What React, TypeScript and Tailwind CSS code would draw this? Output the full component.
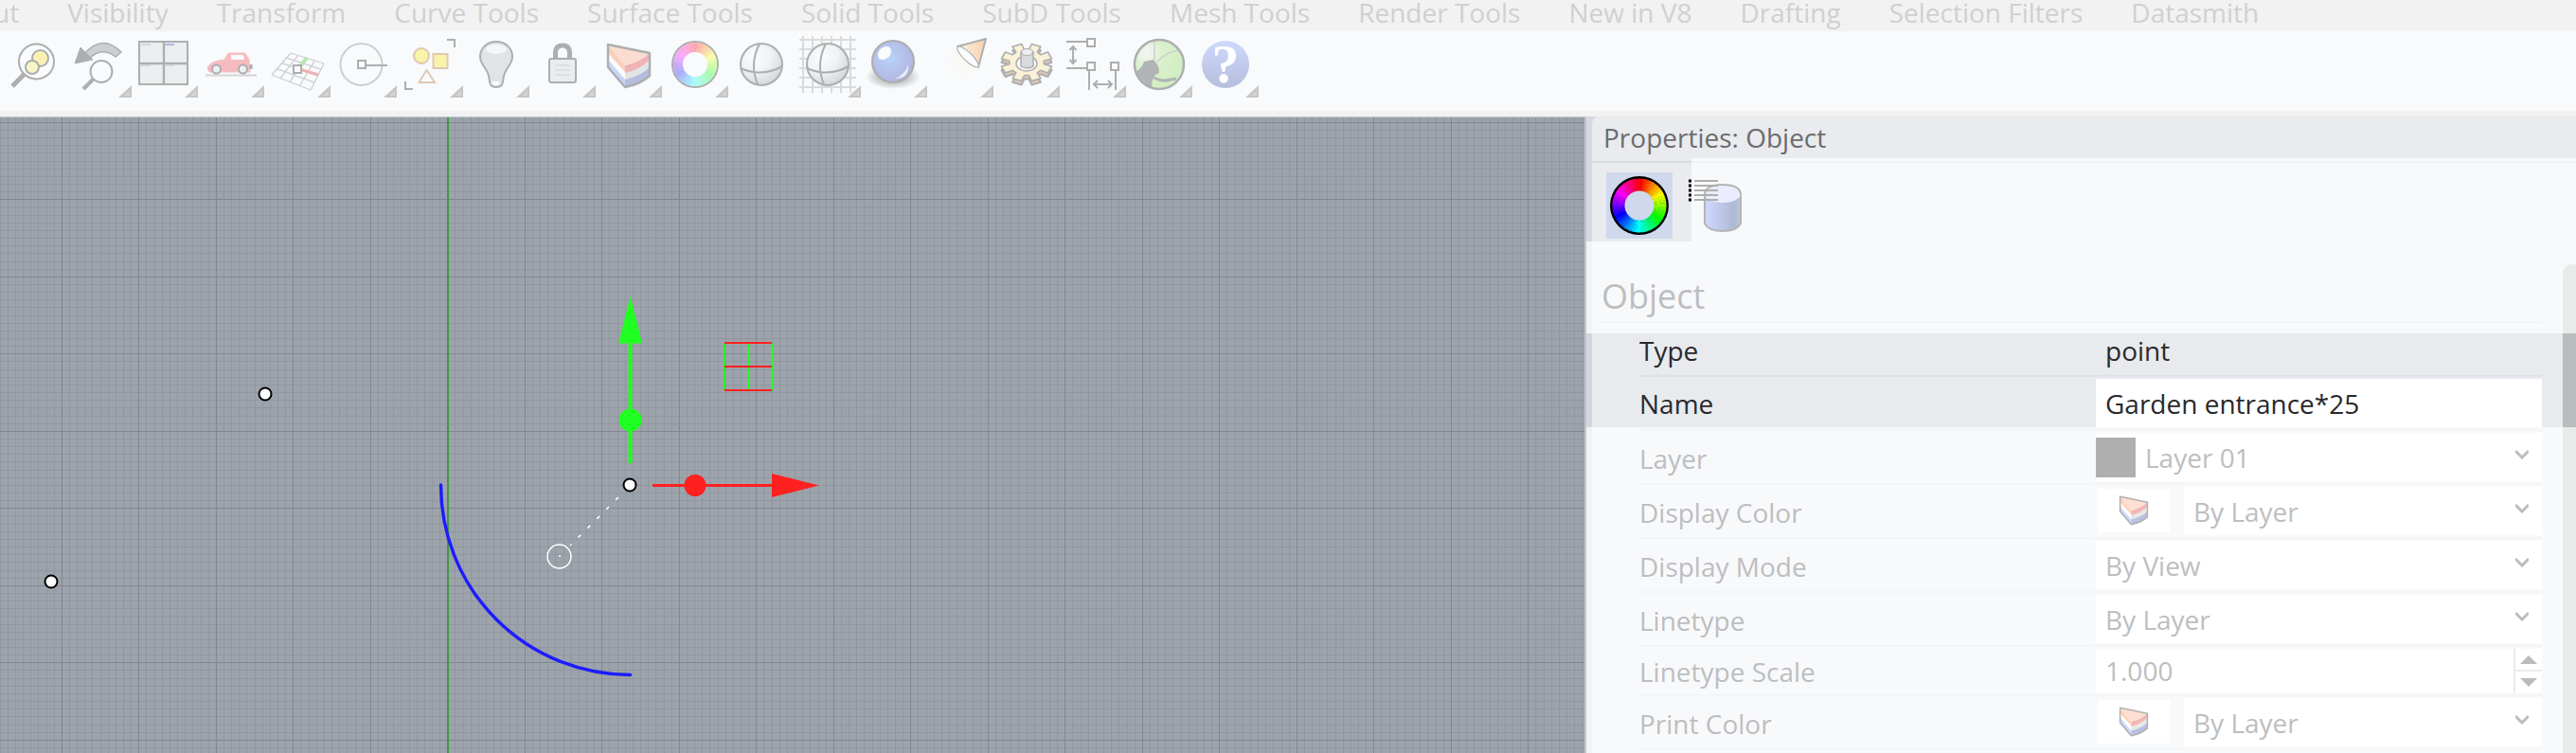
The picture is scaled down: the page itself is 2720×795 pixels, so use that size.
import { useId } from "react";
import type { ReactNode } from "react";

const menuItems = [
  "ut",
  "Visibility",
  "Transform",
  "Curve Tools",
  "Surface Tools",
  "Solid Tools",
  "SubD Tools",
  "Mesh Tools",
  "Render Tools",
  "New in V8",
  "Drafting",
  "Selection Filters",
  "Datasmith",
];

function polar(cx: number, cy: number, r: number, deg: number) {
  const a = ((deg - 90) * Math.PI) / 180;
  return `${(cx + r * Math.cos(a)).toFixed(2)} ${(cy + r * Math.sin(a)).toFixed(2)}`;
}

function HueRing({ cx, cy, r, inner }: { cx: number; cy: number; r: number; inner: number }) {
  const steps = 60;
  const size = 360 / steps;
  return (
    <g>
      {Array.from({ length: steps }, (_, i) => {
        const from = i * size;
        const to = from + size + 0.6;
        return (
          <path
            key={i}
            fill={`hsl(${from} 100% 50%)`}
            d={`M${polar(cx, cy, r, from)}A${r} ${r} 0 0 1 ${polar(cx, cy, r, to)}L${polar(cx, cy, inner, to)}A${inner} ${inner} 0 0 0 ${polar(cx, cy, inner, from)}Z`}
          />
        );
      })}
    </g>
  );
}

function Cake() {
  return (
    <g strokeLinejoin="round">
      <path d="M12 14L30 36V59L12 38Z" fill="#fff" />
      <path d="M12 14L30 36V43L12 23Z" fill="#ff7733" />
      <path d="M12 30L30 51V59L12 38Z" fill="#6a86f5" />
      <path d="M30 36Q45 33 56 23V47Q46 56 30 59Z" fill="#b9b9b9" />
      <path d="M30 36Q45 33 56 23V30Q45 41 30 44Z" fill="#dd1f26" />
      <path d="M30 51Q45 48 56 38V47Q46 56 30 59Z" fill="#2a3fa0" />
      <path d="M12 14L56 23Q45 33 30 36Z" fill="#ff9f7a" />
      <path d="M12 14L56 23V47Q46 56 30 59L12 38Z" fill="none" stroke="#111" strokeWidth="2.4" />
    </g>
  );
}

function Sphere() {
  const id = useId();
  return (
    <g stroke="#111" strokeWidth="2">
      <radialGradient id={id} cx="0.35" cy="0.3" r="0.75">
        <stop offset="0" stopColor="#fff" />
        <stop offset="0.5" stopColor="#e4e4e4" />
        <stop offset="1" stopColor="#8a8a8a" />
      </radialGradient>
      <circle cx="34" cy="35" r="22" fill={`url(#${id})`} />
      <path d="M32 13Q21 35 30 56M12 39Q34 49 56 37" fill="none" />
    </g>
  );
}

function Gear() {
  const teeth = 8;
  const pts: string[] = [];
  for (let i = 0; i < teeth; i++) {
    const base = (i * 360) / teeth + 22.5;
    const profile: [number, number][] = [
      [-15, 0.68],
      [-11, 1],
      [11, 1],
      [15, 0.68],
    ];
    for (const [d, k] of profile) {
      const a = ((base + d) * Math.PI) / 180;
      pts.push(`${(34 + 27 * k * Math.cos(a)).toFixed(1)},${(33 + 20 * k * Math.sin(a)).toFixed(1)}`);
    }
  }
  return (
    <g strokeLinejoin="round">
      <polygon points={pts.join(" ")} transform="translate(0 4)" fill="#a85a2a" stroke="#111" strokeWidth="2" />
      <polygon points={pts.join(" ")} fill="#ffdf8a" stroke="#111" strokeWidth="1.6" />
      <ellipse cx="34" cy="34" rx="11" ry="8" fill="#fff" stroke="#111" strokeWidth="1.5" />
      <path d="M28 22V37Q34 41 41 37V22Z" fill="#999" stroke="#111" strokeWidth="1.5" />
      <ellipse cx="34.5" cy="22" rx="6" ry="3.5" fill="#ddd" stroke="#111" strokeWidth="1.2" />
    </g>
  );
}

function CPlaneGrid() {
  // corners of the tilted construction plane, interpolated into 4 x 4 cells
  const a = [27, 23];
  const b = [62, 34];
  const c = [48, 62];
  const d = [7, 46];
  const at = (p: number[], q: number[], t: number) =>
    `${(p[0] + (q[0] - p[0]) * t).toFixed(1)} ${(p[1] + (q[1] - p[1]) * t).toFixed(1)}`;
  const ts = [0, 0.22, 0.46, 0.72, 1];
  return (
    <g fill="none">
      {ts.map((t) => (
        <path
          key={t}
          stroke="#777"
          strokeWidth="1.3"
          d={`M${at(a, b, t)}L${at(d, c, t)}M${at(a, d, t)}L${at(b, c, t)}`}
        />
      ))}
      <path d="M36 38L44 28" stroke="#3cb91e" strokeWidth="4" />
      <path d="M36 40L56 46" stroke="#e01818" strokeWidth="3" />
      <rect x="30" y="36" width="8" height="8" fill="#fff" stroke="#111" strokeWidth="2" />
    </g>
  );
}

const tools: { name: string; corner: boolean; icon: ReactNode }[] = [
  {
    name: "Zoom selected",
    corner: false,
    icon: (
      <g stroke="#111">
        <path d="M27 44L13 58" strokeWidth="5" />
        <circle cx="38.5" cy="32" r="18.5" fill="#fff" strokeWidth="2" />
        <circle cx="42.5" cy="28.5" r="8.5" fill="#ffe21a" strokeWidth="2" />
        <circle cx="34" cy="38" r="7" fill="#fff050" strokeWidth="2" />
      </g>
    ),
  },
  {
    name: "Undo view change",
    corner: true,
    icon: (
      <g stroke="#111">
        <path d="M19 24Q38 2 58 22L52 27Q38 16 25 28Z" fill="#777" strokeWidth="1.5" />
        <path d="M9 34L15 17L28 30Z" fill="#111" />
        <path d="M29 50L18 61" strokeWidth="4" />
        <circle cx="37" cy="42.5" r="11.5" fill="#fff" strokeWidth="2" />
      </g>
    ),
  },
  {
    name: "4 viewports",
    corner: true,
    icon: (
      <g>
        <rect x="7" y="11" width="51" height="45" fill="#d5d5d5" stroke="#111" strokeWidth="2" />
        <path d="M33 11V56M7 34H58" stroke="#111" strokeWidth="2.4" />
        <path d="M9 14H19M9 36H19M34 36H44" stroke="#888" strokeWidth="2" />
        <path d="M34 14H44" stroke="#1c32b8" strokeWidth="2" />
      </g>
    ),
  },
  {
    name: "Right view",
    corner: true,
    icon: (
      <g>
        <path d="M7 46.5H61" stroke="#888" strokeWidth="2" />
        <path d="M10 37Q14 31 27 30L31 23H49L53 30L54 43H11Q8 40 10 37Z" fill="#f23a40" stroke="#f05058" />
        <path d="M34 25H47L48 30H34Z" fill="#fff" />
        <path d="M55 35V40" stroke="#111" strokeWidth="3" />
        <circle cx="18.5" cy="40" r="4.5" fill="#ddd" stroke="#111" strokeWidth="2" />
        <circle cx="46.5" cy="40" r="4.5" fill="#ddd" stroke="#111" strokeWidth="2" />
      </g>
    ),
  },
  { name: "Set CPlane", corner: true, icon: <CPlaneGrid /> },
  {
    name: "Object snap",
    corner: true,
    icon: (
      <g fill="none">
        <circle cx="31.5" cy="35" r="22" stroke="#777" strokeWidth="2" />
        <path d="M36 36H59" stroke="#111" strokeWidth="2" />
        <rect x="28" y="31" width="8" height="8" fill="#fff" stroke="#111" strokeWidth="2" />
      </g>
    ),
  },
  {
    name: "Select",
    corner: true,
    icon: (
      <g strokeWidth="2">
        <circle cx="25" cy="26" r="8" fill="#ffe600" stroke="#b0601a" />
        <rect x="37.5" y="24" width="15" height="15" fill="#ffe600" stroke="#b0601a" />
        <path d="M30.5 41L39 54H22.5Z" fill="none" stroke="#b0601a" />
        <path d="M52 9H60V17M8 53V61H16" fill="none" stroke="#111" />
      </g>
    ),
  },
  {
    name: "Hide objects",
    corner: true,
    icon: (
      <g>
        <path
          d="M34 11C44 11 51 18 51 27C51 36 42 40 41.5 50C41 56 40 59 34 59C28 59 27 56 26.5 50C26 40 17 36 17 27C17 18 24 11 34 11Z"
          fill="#b4b4b4"
          stroke="#111"
          strokeWidth="2"
        />
        <ellipse cx="34" cy="19" rx="11" ry="5" fill="#eee" />
        <path d="M29 53H38L36 57H31Z" fill="#fff" />
      </g>
    ),
  },
  {
    name: "Lock objects",
    corner: true,
    icon: (
      <g>
        <path d="M26.5 29V22Q27 15 34 15Q41 15 41.5 22V29" fill="none" stroke="#111" strokeWidth="5" />
        <rect x="20" y="29" width="28" height="25" rx="2" fill="#d0d0d0" stroke="#111" strokeWidth="2" />
        <path d="M26 36H42M26 41H42M26 46H42" stroke="#999" strokeWidth="1.5" />
      </g>
    ),
  },
  { name: "Layers", corner: true, icon: <Cake /> },
  {
    name: "Properties",
    corner: true,
    icon: (
      <g fill="none" stroke="#111">
        <circle cx="34" cy="35" r="24" strokeWidth="2" />
        <g stroke="none">
          <HueRing cx={34} cy={35} r={23} inner={13} />
        </g>
      </g>
    ),
  },
  { name: "Shaded viewport", corner: false, icon: <Sphere /> },
  {
    name: "Shade",
    corner: true,
    icon: (
      <g>
        <path
          d="M8 5V65M18 5V65M28 5V65M38 5V65M48 5V65M58 5V65M4 9H64M4 19H64M4 29H64M4 39H64M4 49H64M4 59H64"
          stroke="#999"
          strokeWidth="2"
        />
        <Sphere />
      </g>
    ),
  },
  {
    name: "Render",
    corner: true,
    icon: (
      <g>
        <radialGradient id="ballShadow">
          <stop offset="0.3" stopColor="#111" />
          <stop offset="1" stopColor="#111" stopOpacity="0" />
        </radialGradient>
        <radialGradient id="ball" cx="0.4" cy="0.4" r="0.65">
          <stop offset="0" stopColor="#2f86f7" />
          <stop offset="1" stopColor="#2a20a0" />
        </radialGradient>
        <ellipse cx="33" cy="48" rx="29" ry="13" fill="url(#ballShadow)" />
        <circle cx="33" cy="32" r="22" fill="#fff" />
        <circle cx="33" cy="32" r="22" fill="url(#ball)" stroke="#111" strokeWidth="2.2" />
        <ellipse cx="24" cy="23" rx="8" ry="6" transform="rotate(-45 24 23)" fill="#fff" />
        <path d="M35 50Q46 46 49 35Q50 50 35 50Z" fill="#b8e8ff" />
      </g>
    ),
  },
  {
    name: "Spotlight",
    corner: true,
    icon: (
      <g strokeLinejoin="round">
        <radialGradient id="glow">
          <stop offset="0" stopColor="#fff6dc" />
          <stop offset="1" stopColor="#fff6dc" stopOpacity="0" />
        </radialGradient>
        <linearGradient id="cone" x1="0" x2="1">
          <stop offset="0" stopColor="#ffe9a8" />
          <stop offset="1" stopColor="#ff7a14" />
        </linearGradient>
        <circle cx="38" cy="31" r="20" fill="url(#glow)" />
        <path d="M61 8L31 16Q33 22 53 38Z" fill="url(#cone)" stroke="#111" strokeWidth="2" />
        <ellipse cx="42" cy="27" rx="15" ry="4.5" transform="rotate(44 42 27)" fill="#fff" stroke="#333" strokeWidth="1.3" />
      </g>
    ),
  },
  { name: "Options", corner: true, icon: <Gear /> },
  {
    name: "Dimensions",
    corner: true,
    icon: (
      <g fill="none" stroke="#111" strokeWidth="2">
        <path d="M6 11H28M6 39H28M30 42V62M58 42V62M13 17V33M36 56H53" />
        <path d="M9.5 20L13 16L16.5 20M9.5 30L13 34L16.5 30M39 52L35 56L39 60M50 52L54 56L50 60" />
        <g fill="#fff">
          <rect x="28" y="8" width="8" height="8" />
          <rect x="28" y="33" width="8" height="8" />
          <rect x="53" y="33" width="8" height="8" />
        </g>
      </g>
    ),
  },
  {
    name: "Grasshopper",
    corner: true,
    icon: (
      <g>
        <radialGradient id="hopper" cx="0.25" cy="0.25" r="0.7">
          <stop offset="0" stopColor="#eee" />
          <stop offset="0.45" stopColor="#9be070" />
          <stop offset="1" stopColor="#84d84e" />
        </radialGradient>
        <circle cx="34" cy="35" r="26" fill="url(#hopper)" />
        <path d="M9 43Q16 39 18 32L28 30Q34 36 34 44L30 46Q26 50 26 60Q12 56 9 43Z" fill="#222" />
        <path d="M28 49Q38 54 46 51L52 50" fill="none" stroke="#222" strokeWidth="3" />
        <path d="M29 10V30M32 32Q40 23 54 20" fill="none" stroke="#777" strokeWidth="1.5" />
        <circle cx="34" cy="35" r="26" fill="none" stroke="#111" strokeWidth="2.5" />
      </g>
    ),
  },
  {
    name: "Help",
    corner: true,
    icon: (
      <g>
        <linearGradient id="help" x1="0" x2="0" y1="0" y2="1">
          <stop offset="0" stopColor="#7290ff" />
          <stop offset="1" stopColor="#2a3f96" />
        </linearGradient>
        <circle cx="34" cy="35" r="25" fill="url(#help)" />
      </g>
    ),
  },
];

function Toolbar() {
  return (
    <div role="toolbar" className="flex h-[84px] shrink-0 bg-[#f8fafc]">
      {tools.map((tool) => (
        <button key={tool.name} type="button" aria-label={tool.name} className="h-full w-[70px] shrink-0">
          <svg viewBox="0 0 70 84" className="h-full w-full">
            <g opacity="0.32">{tool.icon}</g>
            {tool.name === "Help" && (
              <text
                x="34"
                y="54"
                textAnchor="middle"
                fontSize="58"
                fontWeight="bold"
                fill="#fff"
                fontFamily="'Liberation Serif', serif"
              >
                ?
              </text>
            )}
            {tool.corner && (
              <>
                <path d="M55 70H69V57Z" fill="#c6c6c6" />
                <path d="M61 68H67V62Z" fill="#d4d4d4" />
              </>
            )}
          </svg>
        </button>
      ))}
    </div>
  );
}

const majorStep = 81.5;
const minorStep = 8.15;

function PointMarker({ x, y }: { x: number; y: number }) {
  return <circle cx={x} cy={y} r="6.5" fill="#fff" stroke="#000" strokeWidth="2" />;
}

function Viewport() {
  const minor = Array.from({ length: 500 }, (_, i) => i);
  const major = Array.from({ length: 50 }, (_, i) => i);
  const originX = 65.3 - majorStep;
  const originY = 5.3;
  const minorPath = minor
    .map((i) => {
      const x = Math.floor(originX + i * minorStep);
      const y = Math.floor(originY + (i - 1) * minorStep);
      return `M${x}.5 0V3000M0 ${y}.5H4000`;
    })
    .join("");
  const majorPath = major
    .map((i) => {
      const x = Math.floor(originX + i * majorStep);
      const y = Math.floor(originY + i * majorStep);
      return `M${x}.5 0V3000M0 ${y}.5H4000`;
    })
    .join("");

  return (
    <main className="min-w-0 flex-1 overflow-hidden border-t border-r-2 border-[#bec4cf] bg-[#9da3ab]">
      <svg className="block h-full w-full">
        <path d={minorPath} stroke="#9097a0" fill="none" />
        <path d={majorPath} stroke="#83868f" fill="none" />
        <path d="M473 0V3000" stroke="#419641" strokeWidth="2" />

        <g transform="translate(0 -124)">
          <path d="M465.5 512A200 200 0 0 0 665.5 712.5" fill="none" stroke="#1c1cff" strokeWidth="3.4" strokeLinecap="round" />
          <path d="M660 518L602 576" stroke="#fff" strokeWidth="1.5" strokeDasharray="4 10" strokeDashoffset="-10" />
          <circle cx="590.5" cy="587.5" r="12.5" fill="none" stroke="#fff" strokeWidth="1.5" />
          <circle cx="591" cy="587" r="1" fill="#fff" />

          <g fill="#20ff20">
            <path d="M665.5 313L678 362.5H653Z" />
            <rect x="663.5" y="360" width="4" height="129" />
            <circle cx="665.5" cy="443.5" r="12" />
          </g>
          <g fill="#ff2020">
            <path d="M865 512.5L815 500V525Z" />
            <rect x="689" y="511" width="128" height="3" />
            <circle cx="734" cy="512.5" r="11.5" />
          </g>
          <path d="M765 362V412M790 362V412M815 362V412" stroke="#20ff20" strokeWidth="2" />
          <path d="M765 362H815M765 387H815M765 412H815" stroke="#ff2020" strokeWidth="2" />

          <PointMarker x={280} y={416} />
          <PointMarker x={54} y={614} />
          <PointMarker x={665} y={512} />
        </g>
      </svg>
    </main>
  );
}

function Field({
  id,
  label,
  compact,
  children,
}: {
  id: string;
  label: string;
  compact?: boolean;
  children: ReactNode;
}) {
  return (
    <div
      className={`grid grid-cols-[482px_1fr] border-t-2 border-[#f3f5f7] pt-[2px] ${compact ? "h-[52px]" : "h-[57px]"}`}
    >
      <label htmlFor={id} className="self-center">
        {label}
      </label>
      <div className={`flex ${compact ? "h-[46px]" : "h-[51px]"}`}>{children}</div>
    </div>
  );
}

function Dropdown({ id, value, swatch }: { id: string; value: string; swatch?: boolean }) {
  return (
    <div className="relative flex flex-1 items-center bg-white">
      {swatch && <span className="h-[42px] w-[42px] bg-[#afafaf]" />}
      <select id={id} className="h-full flex-1 appearance-none bg-transparent px-[10px] outline-none">
        <option>{value}</option>
      </select>
      <svg viewBox="0 0 14 11" className="pointer-events-none absolute top-[17px] right-[14px] h-[11px] w-[14px]">
        <path d="M0 2L7 9L14 2" fill="none" stroke="#bcbcbc" strokeWidth="3" />
      </svg>
    </div>
  );
}

function ColorField({ id, value }: { id: string; value: string }) {
  return (
    <>
      <button
        type="button"
        aria-label="Pick color"
        className="mt-[2px] mr-[15px] ml-[2px] flex h-[46px] w-[76px] items-center justify-center bg-white"
      >
        <svg viewBox="10 12 48 49" className="h-[32px] w-[32px]">
          <g opacity="0.32">
            <Cake />
          </g>
        </svg>
      </button>
      <Dropdown id={id} value={value} />
    </>
  );
}

function PropertiesPanel() {
  return (
    <aside className="flex w-[1045px] shrink-0 flex-col bg-[#f8f9fb] text-[28px] text-[#bdbebf]">
      <div className="border-l-[6px] border-[#d7d9de] bg-[#d7d9de]">
        <h1 className="h-[44px] rounded-tl-[8px] bg-[#e9ebee] pl-[12px] leading-[44px] text-[#6c6c6c]">
          Properties: Object
        </h1>
      </div>

      <div role="tablist" className="flex h-[88px]">
        <div className="w-[111px] border-l-[6px] border-[#d7d9de] bg-[#e9ebee] pt-[3px]">
          <div className="border-t-2 border-[#dadbde] pt-[10px] pl-[15px]">
            <button type="button" role="tab" aria-label="Object" aria-selected="true" className="block h-[70px] w-[70px] bg-[#d0d8ec]">
              <svg viewBox="0 0 70 70" className="h-full w-full">
                <circle cx="35" cy="35" r="31" fill="#000" />
                <HueRing cx={35} cy={35} r={28.5} inner={15} />
                <circle cx="35" cy="35" r="15.5" fill="#d0d8ec" />
              </svg>
            </button>
          </div>
        </div>
        <div className="flex-1 pt-[3px]">
          <div className="border-t-2 border-[#f1f2f4] pt-[10px]">
            <button type="button" role="tab" aria-label="Material" aria-selected="false" className="relative -ml-1 block h-[70px] w-[60px]">
              <svg viewBox="0 0 60 70" className="h-full w-full">
                <linearGradient id="can" x1="0" x2="1">
                  <stop offset="0.1" stopColor="#ccd5fb" />
                  <stop offset="0.8" stopColor="#b0b9d3" />
                  <stop offset="1" stopColor="#bcc5de" />
                </linearGradient>
                <path d="M18 23V54Q22 62 37 62Q52 62 56 54V23Z" fill="url(#can)" stroke="#b5b5b5" strokeWidth="2" />
                <ellipse cx="37" cy="22.5" rx="19" ry="9.5" fill="#e9edff" />
                <path d="M18 24Q18 13 37 13Q56 13 56 24" fill="none" stroke="#b5b5b5" strokeWidth="2" />
                <path d="M7 9H32M7 14H32M7 19H32M7 24H32M7 29H32" stroke="#aeaeae" strokeWidth="2" />
                <path d="M1 9H4M1 14H4M1 19H4M1 24H4M1 29H4" stroke="#000" strokeWidth="3" />
              </svg>
            </button>
          </div>
        </div>
      </div>

      <section className="flex flex-1 flex-col">
        <div className="flex h-[97px] border-l-[6px] border-[#f2f2f3] pl-[10px]">
          <h2 className="h-[86px] flex-1 border-b-2 border-[#f3f4f6] pt-[34px] text-[36px] leading-[48px]">Object</h2>
          <div className="mt-6 ml-[22px] w-[14px] rounded-tl-[10px] bg-[#e9ebeb]" />
        </div>

        <div className="flex border-l-[6px] border-[#d3d6db] bg-[#e8eaee] text-[#29292b]">
          <div className="flex-1 pl-[50px]">
            <div className="grid h-[46px] grid-cols-[482px_1fr] border-b-2 border-[#dde2e8] leading-[36px]">
              <span>Type</span>
              <span className="pl-[10px]">point</span>
            </div>
            <div className="grid h-[53px] grid-cols-[482px_1fr] pt-[2px]">
              <label htmlFor="name" className="self-center">
                Name
              </label>
              <input id="name" defaultValue="Garden entrance*25" className="h-full w-full bg-white px-[10px] outline-none" />
            </div>
          </div>
          <div className="ml-[22px] w-[14px] bg-[#bbbcbe]" />
        </div>

        <div className="flex flex-1 border-l-[6px] border-[#f2f2f3]">
          <div className="flex-1 pt-[2px] pl-[50px]">
            <Field id="layer" label="Layer">
              <Dropdown id="layer" value="Layer 01" swatch />
            </Field>
            <Field id="display-color" label="Display Color">
              <ColorField id="display-color" value="By Layer" />
            </Field>
            <Field id="display-mode" label="Display Mode">
              <Dropdown id="display-mode" value="By View" />
            </Field>
            <Field id="linetype" label="Linetype">
              <Dropdown id="linetype" value="By Layer" />
            </Field>
            <Field id="linetype-scale" label="Linetype Scale" compact>
              <input id="linetype-scale" defaultValue="1.000" className="h-full min-w-0 flex-1 bg-white px-[10px] outline-none" />
              <div className="flex w-[30px] flex-col gap-[2px] border-l-2 border-[#e9ebf0] bg-[#e9ebf0]">
                <button type="button" aria-label="Increase" className="flex flex-1 items-center justify-center bg-white">
                  <svg viewBox="0 0 18 9" className="h-[9px] w-[18px]">
                    <path d="M0 9L9 0L18 9Z" fill="#bbb" />
                  </svg>
                </button>
                <button type="button" aria-label="Decrease" className="flex flex-1 items-center justify-center bg-white">
                  <svg viewBox="0 0 18 9" className="h-[9px] w-[18px]">
                    <path d="M0 0L9 9L18 0Z" fill="#bbb" />
                  </svg>
                </button>
              </div>
            </Field>
            <Field id="print-color" label="Print Color">
              <ColorField id="print-color" value="By Layer" />
            </Field>
            <div className="border-t-2 border-[#f3f5f7]" />
          </div>
          <div className="ml-[22px] w-[14px] bg-[#e9ebeb]" />
        </div>
      </section>
    </aside>
  );
}

export default function App() {
  return (
    <div className="flex h-screen flex-col overflow-hidden bg-[#f2f2f2] font-['Open_Sans','Noto_Sans',sans-serif]">
      <nav className="-ml-[7px] flex h-[33px] shrink-0 gap-[51px] text-[28px] leading-[27px] whitespace-nowrap text-[#d0d0d0]">
        {menuItems.map((item) => (
          <a key={item} href="#">
            {item}
          </a>
        ))}
      </nav>
      <Toolbar />
      <div className="flex min-h-0 flex-1 pt-[6px]">
        <Viewport />
        <PropertiesPanel />
      </div>
    </div>
  );
}
